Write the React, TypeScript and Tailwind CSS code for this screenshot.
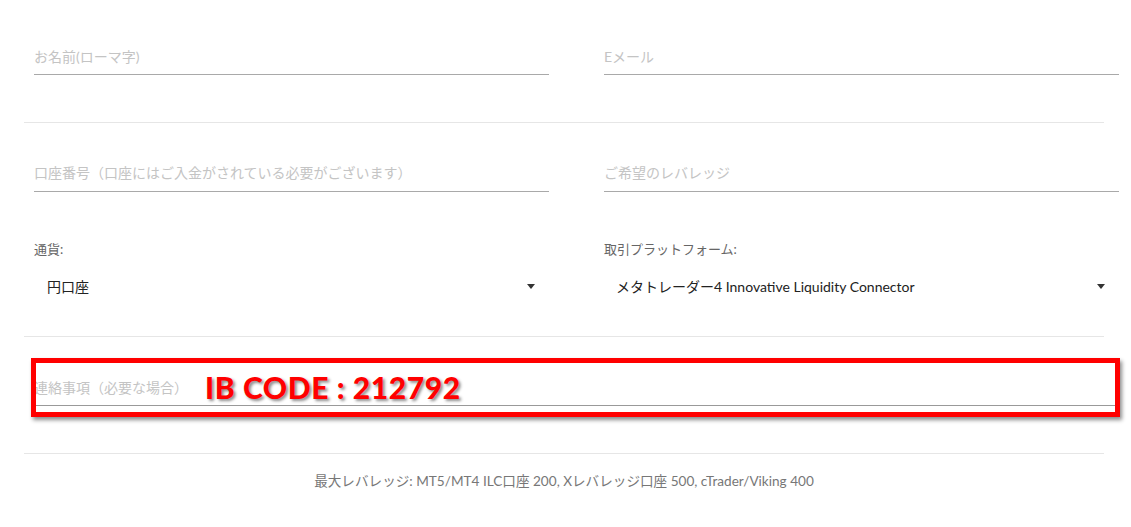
import React from 'react';

const font = "font-['Lato','Noto_Sans_CJK_JP',sans-serif]";

function TextField({ placeholder, height = 'h-[37px]' }: { placeholder: string; height?: string }) {
  return (
    <div className={`${height} flex items-center border-b border-[#a9a9a9] text-[14px] text-[#c4c4c4]`}>
      {placeholder}
    </div>
  );
}

function SelectField({ label, value, pad }: { label: string; value: React.ReactNode; pad: string }) {
  return (
    <div>
      <div className="h-[18px] flex items-center text-[13px] text-[#666]">{label}</div>
      <div className={`mt-[9px] h-[36px] flex items-center justify-between ${pad} pr-[14px] text-[14px] text-[#222]`}>
        <span>{value}</span>
        <span className="w-0 h-0 border-l-[4.5px] border-r-[4.5px] border-t-[5px] border-l-transparent border-r-transparent border-t-[#333]" />
      </div>
    </div>
  );
}

function Divider({ className = '' }: { className?: string }) {
  return <div className={`ml-[24px] w-[1080px] h-px bg-[#e6e6e6] ${className}`} />;
}

export default function App() {
  return (
    <div className={`w-[1131px] h-[527px] bg-white overflow-hidden ${font}`}>
      <div className="pl-[34px] pt-[38px] grid grid-cols-[515px_515px] gap-x-[55px]">
        <TextField placeholder="お名前(ローマ字)" />
        <TextField placeholder="Eメール" />
      </div>

      <Divider className="mt-[47px]" />

      <div className="pl-[34px] mt-[31px] grid grid-cols-[515px_515px] gap-x-[55px]">
        <TextField placeholder="口座番号（口座にはご入金がされている必要がございます）" height="h-[38px]" />
        <TextField placeholder="ご希望のレバレッジ" height="h-[38px]" />
      </div>

      <div className="pl-[34px] mt-[49px] grid grid-cols-[515px_515px] gap-x-[55px]">
        <SelectField label="通貨:" value="円口座" pad="pl-[13px]" />
        <SelectField
          label="取引プラットフォーム:"
          value={<>メタトレーダー4 Innovative Liquidity Connector</>}
          pad="pl-[12px]"
        />
      </div>

      <Divider className="mt-[32px]" />

      <div className="ml-[34px] mr-[16px] mt-[32px] relative">
        <div className="h-[37px] flex items-center border-b border-[#999] text-[14px] text-[#c4c4c4]">
          連絡事項（必要な場合）
        </div>
        {/* annotation overlay */}
        <div className="absolute left-[-3px] top-[-11px] w-[1089px] h-[59px] border-[5px] border-[#ff0000] shadow-[2px_3px_4px_rgba(0,0,0,0.45)] pointer-events-none" />
        <div className="absolute left-[171px] top-[0px] text-[30px] leading-[36px] font-black text-[#ff0000] tracking-[0.6px] [-webkit-text-stroke:4px_white] [paint-order:stroke_fill] [text-shadow:2px_2px_3px_rgba(0,0,0,0.45)] font-['Lato',sans-serif]">
          IB CODE : 212792
        </div>
      </div>

      <Divider className="mt-[47px]" />

      <div className="ml-[24px] w-[1080px] mt-[18px] h-[18px] flex items-center justify-center text-[13.6px] text-[#777]">
        最大レバレッジ: MT5/MT4 ILC口座 200, Xレバレッジ口座 500, cTrader/Viking 400
      </div>
    </div>
  );
}
